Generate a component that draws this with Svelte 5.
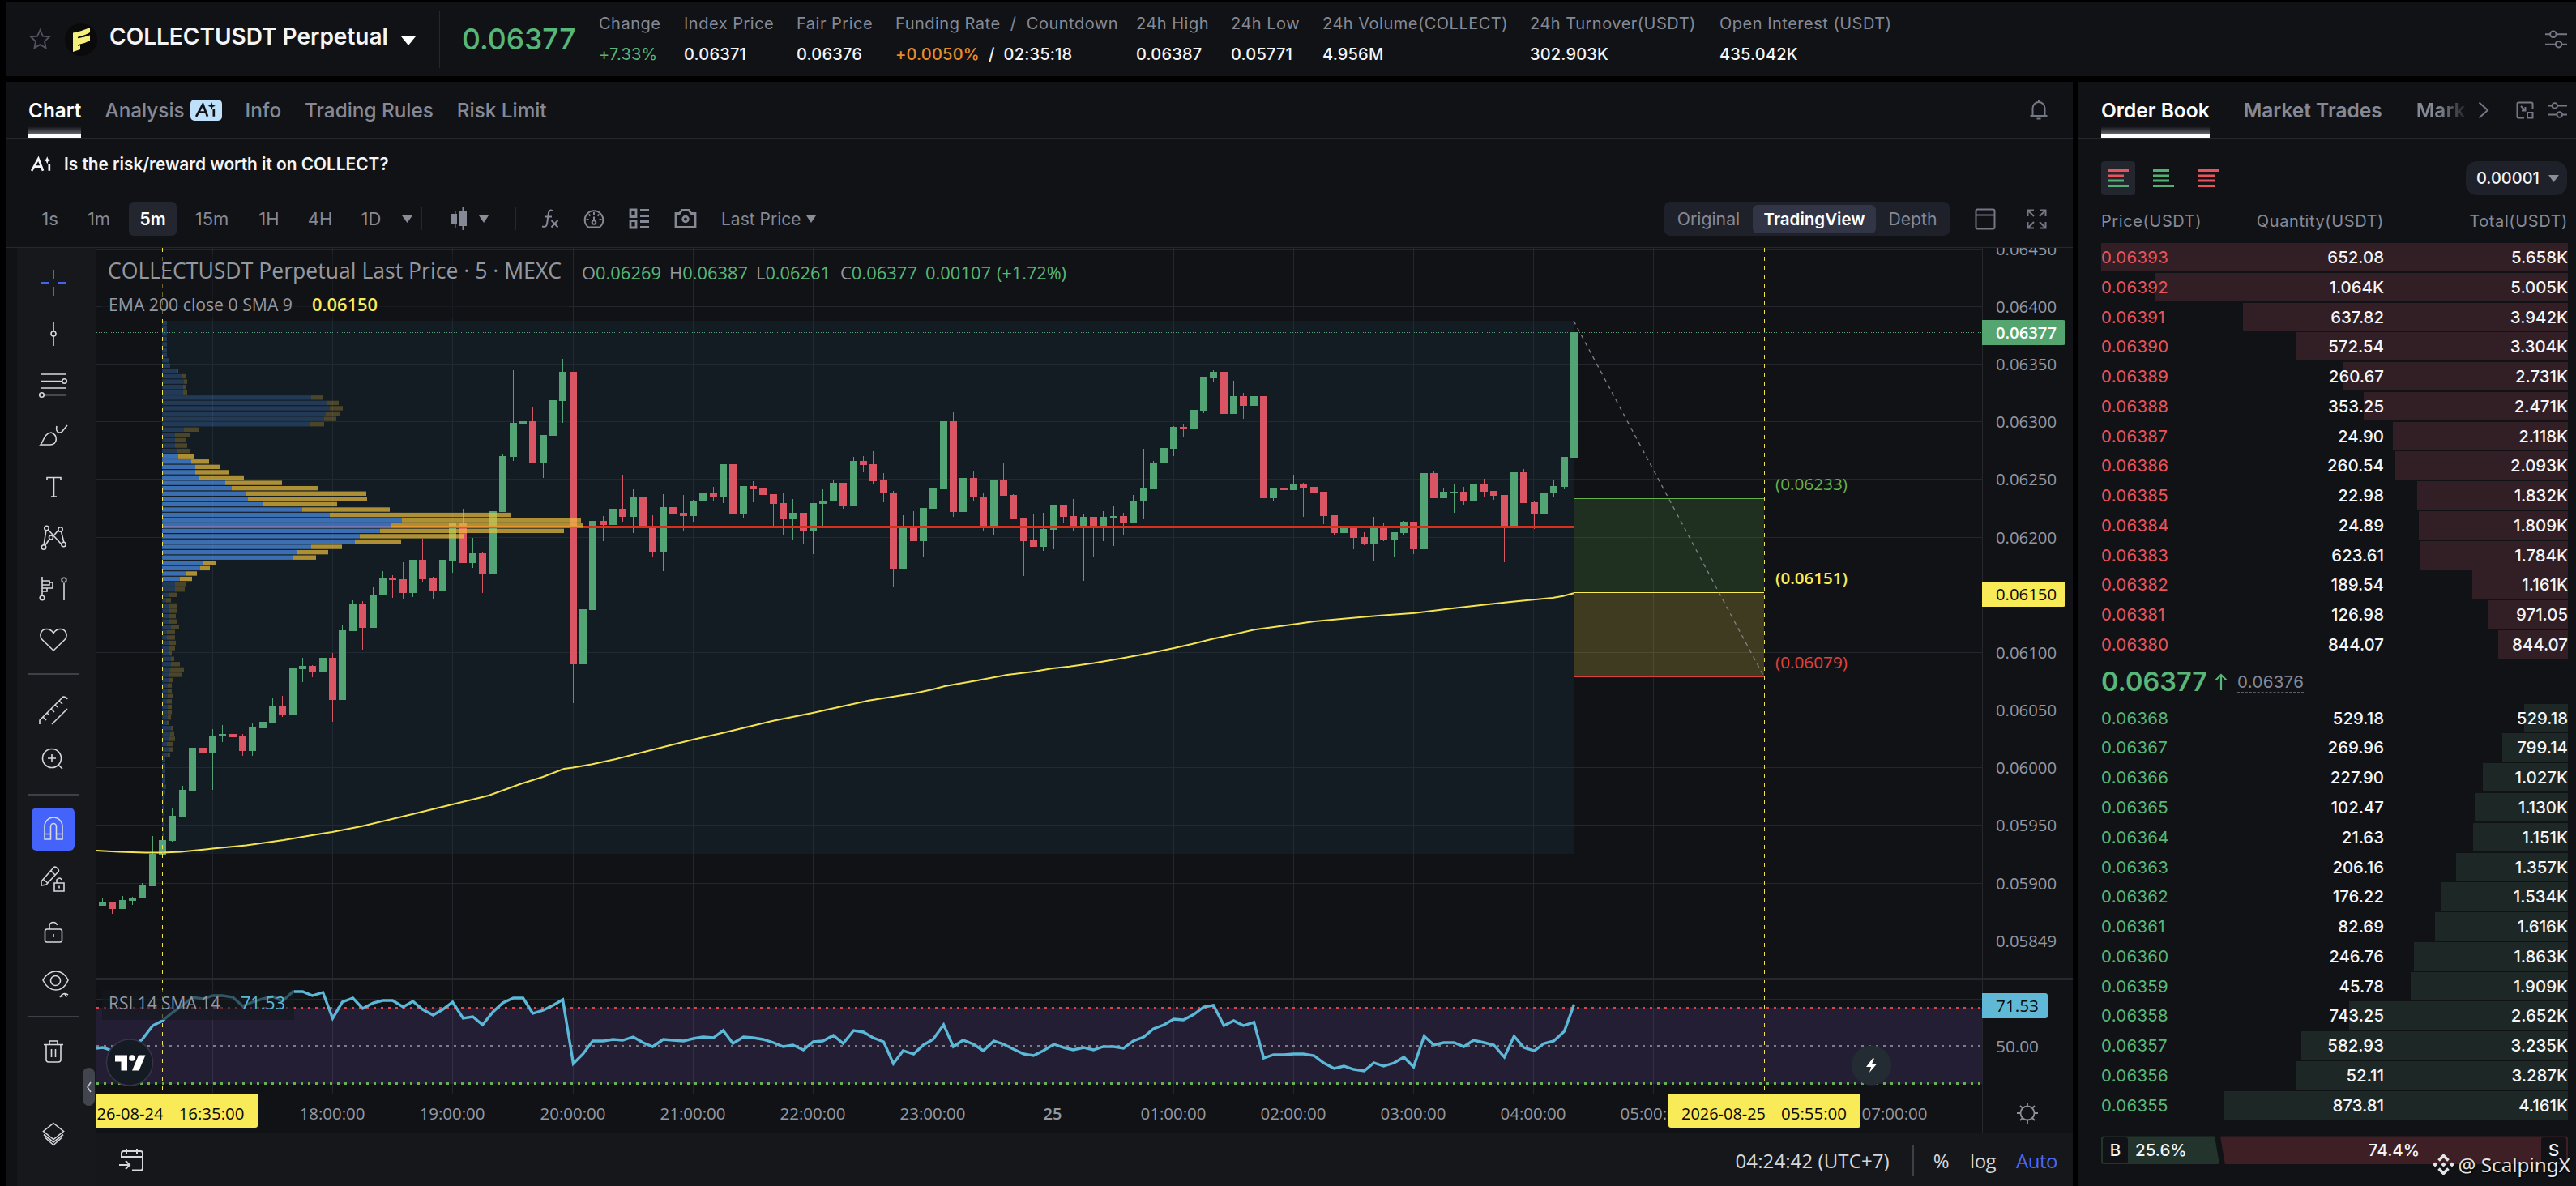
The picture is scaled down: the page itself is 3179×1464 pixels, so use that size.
<script>
  const stats = [
    { label: 'Change', value: '+7.33%', tone: 'up' },
    { label: 'Index Price', value: '0.06371' },
    { label: 'Fair Price', value: '0.06376' },
    { label: 'Funding Rate  /  Countdown', rate: '+0.0050%', value: '  /  02:35:18' },
    { label: '24h High', value: '0.06387' },
    { label: '24h Low', value: '0.05771' },
    { label: '24h Volume(COLLECT)', value: '4.956M' },
    { label: '24h Turnover(USDT)', value: '302.903K' },
    { label: 'Open Interest (USDT)', value: '435.042K' }
  ];

  const intervals = ['1s', '1m', '5m', '15m', '1H', '4H', '1D'];
  let activeInterval = $state('5m');
  let activeView = $state('TradingView');

  const asks = [
    ['0.06393', '652.08', '5.658K'], ['0.06392', '1.064K', '5.005K'],
    ['0.06391', '637.82', '3.942K'], ['0.06390', '572.54', '3.304K'],
    ['0.06389', '260.67', '2.731K'], ['0.06388', '353.25', '2.471K'],
    ['0.06387', '24.90', '2.118K'], ['0.06386', '260.54', '2.093K'],
    ['0.06385', '22.98', '1.832K'], ['0.06384', '24.89', '1.809K'],
    ['0.06383', '623.61', '1.784K'], ['0.06382', '189.54', '1.161K'],
    ['0.06381', '126.98', '971.05'], ['0.06380', '844.07', '844.07']
  ];
  const bids = [
    ['0.06368', '529.18', '529.18'], ['0.06367', '269.96', '799.14'],
    ['0.06366', '227.90', '1.027K'], ['0.06365', '102.47', '1.130K'],
    ['0.06364', '21.63', '1.151K'], ['0.06363', '206.16', '1.357K'],
    ['0.06362', '176.22', '1.534K'], ['0.06361', '82.69', '1.616K'],
    ['0.06360', '246.76', '1.863K'], ['0.06359', '45.78', '1.909K'],
    ['0.06358', '743.25', '2.652K'], ['0.06357', '582.93', '3.235K'],
    ['0.06356', '52.11', '3.287K'], ['0.06355', '873.81', '4.161K']
  ];
  const MAX_TOTAL = 5658;

  function depth(total) {
    const n = total.endsWith('K') ? parseFloat(total) * 1000 : parseFloat(total);
    return (n / MAX_TOTAL) * 100;
  }

  // color, body top, body bottom, high, low
  const candles = [
    'g 1113 1118 1108 1118', 'r 1113 1122 1113 1128', 'g 1111 1122 1106 1122', 'g 1108 1112 1107 1117',
    'g 1093 1109 1090 1109', 'g 1054 1094 1032 1094', 'g 1037 1055 1037 1055', 'g 1007 1038 997 1039',
    'g 975 1008 970 1008', 'g 923 976 923 977', 'r 923 929 869 933', 'g 908 929 900 975',
    'g 906 909 895 916', 'r 906 910 885 923', 'r 909 927 906 933', 'g 898 927 893 933',
    'g 891 899 866 905', 'g 872 892 862 892', 'r 872 883 859 885', 'g 825 883 792 890',
    'g 822 826 812 842', 'r 822 830 821 836', 'g 812 830 809 861', 'r 812 864 806 891',
    'g 778 864 771 864', 'g 745 779 741 779', 'r 745 775 742 802', 'g 734 775 725 775',
    'g 714 735 705 735', 'r 714 716 710 738', 'r 715 732 694 740', 'g 691 732 691 737',
    'r 691 715 665 718', 'r 714 729 712 740', 'g 691 729 691 729', 'g 645 692 645 707',
    'r 645 695 628 695', 'g 683 695 664 701', 'r 683 709 681 732', 'g 631 709 631 709',
    'g 563 632 560 632', 'g 522 564 457 569', 'g 520 523 494 533', 'r 520 571 503 571',
    'g 537 571 537 590', 'g 494 538 457 538', 'g 459 495 443 522', 'r 459 820 459 868',
    'g 752 820 747 826', 'g 643 753 643 753', 'r 643 648 637 668', 'g 628 648 628 649',
    'r 628 638 586 644', 'g 614 638 604 658', 'r 614 650 607 687', 'r 650 681 636 688',
    'g 626 681 610 705', 'r 626 634 611 657', 'r 633 637 611 655', 'g 618 637 617 644',
    'g 608 619 594 627', 'r 608 614 601 618', 'g 573 614 573 621', 'r 573 635 573 643',
    'g 600 635 600 640', 'r 600 604 594 620', 'r 603 611 600 620', 'r 610 622 610 650',
    'r 621 641 608 661', 'g 633 641 616 667', 'r 633 656 633 671', 'g 621 656 621 684',
    'g 618 622 604 650', 'g 596 619 593 619', 'r 596 625 596 628', 'g 569 625 564 625',
    'r 569 574 563 583', 'r 573 594 557 597', 'r 593 609 584 620', 'r 608 702 606 725',
    'g 650 702 636 702', 'r 650 668 631 668', 'g 627 668 627 688', 'g 603 628 577 628',
    'g 520 604 520 604', 'r 520 632 509 638', 'g 590 632 589 632', 'r 590 614 581 618',
    'r 613 650 608 655', 'g 593 650 593 661', 'r 593 612 571 612', 'r 611 641 610 641',
    'r 640 668 640 711', 'r 667 675 634 675', 'g 653 675 633 680', 'g 623 654 623 678',
    'r 623 638 623 645', 'r 637 650 616 655', 'g 638 650 634 717', 'r 638 650 638 688',
    'g 638 650 631 668', 'g 637 639 624 674', 'r 637 645 633 661', 'g 618 645 611 645',
    'g 603 619 554 641', 'g 571 604 569 604', 'g 553 572 553 583', 'g 527 554 526 563',
    'r 527 530 523 540', 'g 506 530 503 534', 'g 465 507 465 510', 'g 459 466 457 472',
    'r 459 511 459 511', 'g 489 511 470 511', 'r 489 501 485 517', 'g 489 501 489 527',
    'r 489 615 489 615', 'g 603 615 603 618', 'r 603 605 597 607', 'g 598 605 586 605',
    'r 598 602 596 638', 'r 601 608 593 616', 'r 607 637 607 647', 'r 636 658 636 660',
    'g 650 658 630 661', 'r 650 664 650 678', 'r 663 672 657 673', 'g 650 672 638 692',
    'r 650 666 645 668', 'g 657 666 657 688', 'g 644 658 643 660', 'r 644 678 644 684',
    'g 584 678 584 678', 'r 584 615 581 615', 'g 607 615 603 615', 'g 607 608 597 633',
    'r 607 619 601 623', 'g 598 619 598 619', 'r 598 607 591 614', 'r 606 612 606 617',
    'r 611 650 611 694', 'g 583 650 583 653', 'r 583 621 579 621', 'r 620 635 618 653',
    'g 608 635 607 635', 'g 600 609 593 613', 'g 564 601 564 604', 'g 410 565 396 576'
  ].map((row, i) => {
    const [color, top, bottom, high, low] = row.split(' ');
    return { x: slot(i), color, top: +top, bottom: +bottom, high: +high, low: +low };
  });

  function slot(i) {
    return Math.floor(126.5 + 12.354 * i);
  }

  // volume profile: up volume width, total width, one row per 6.58px
  const ROW = 6.58;
  const profile = [
    [6, 6], [6, 6], [6, 6], [6, 6], [6, 6], [6, 6], [6, 6], [9, 9], [10, 10], [18, 20],
    [24, 29], [27, 31], [26, 30], [26, 31], [184, 198], [204, 218], [207, 223], [202, 219], [200, 215], [183, 200],
    [27, 46], [16, 34], [16, 30], [16, 31], [19, 34], [20, 39], [36, 58], [41, 71], [41, 83], [46, 101],
    [78, 148], [86, 192], [103, 252], [106, 253], [124, 216], [173, 281], [207, 431], [296, 517], [283, 519], [269, 496],
    [244, 372], [238, 295], [184, 222], [167, 205], [161, 190], [51, 67], [47, 59], [30, 43], [22, 37], [16, 30],
    [16, 28], [9, 19], [5, 11], [8, 18], [8, 18], [8, 17], [8, 18], [11, 21], [6, 16], [6, 16],
    [8, 17], [8, 16], [8, 12], [11, 15], [11, 22], [10, 27], [9, 25], [9, 13], [7, 12], [7, 12],
    [7, 13], [6, 12], [7, 12], [7, 12], [7, 11], [6, 9], [11, 14], [10, 15], [9, 16], [6, 13],
    [8, 14], [7, 10], [4, 4], [4, 4], [4, 4], [4, 4], [4, 4], [5, 5], [4, 4], [3, 3],
    [3, 3], [3, 3], [3, 3], [2, 2], [2, 2], [2, 2], [2, 2], [2, 2], [2, 2], [2, 2]
  ];
  const VALUE_AREA = [25, 48];

  const ema =
    '119,1050 147,1051.5 179,1052.6 200,1052.6 223,1051.5 262,1047.6 304,1043.4 350,1037 397,1029 410,1027 446,1020 509,1005 558,993 603,982 643,967.5 670,959 696,949 707,947.5 730,943.5 760,937 827,920 855,913 892,904.7 953,890 1003,880 1039,872 1072,864.7 1108,859 1129,855.7 1151,851 1166,847 1206,840 1243,833 1276,829 1299,825 1320,822.7 1350,818.5 1385,812.5 1420,806 1449,800 1472,794.7 1498,788.3 1523,783 1548,777.3 1596,770.7 1622,767 1658,763.7 1704,759.7 1746,756.7 1792,751 1834,746.3 1864,743 1892,740.3 1916,738 1929,735.7 1942,732.3';

  const rsi = [
    1293, 1297, 1301, 1292, 1283, 1266, 1260, 1250, 1241, 1231, 1233, 1229, 1229, 1231, 1242, 1237, 1233, 1230, 1236,
    1224, 1224, 1229, 1225, 1257, 1237, 1232, 1245, 1238, 1235, 1235, 1243, 1236, 1246, 1253, 1246, 1237, 1257, 1255,
    1265, 1249, 1238, 1232, 1232, 1251, 1247, 1241, 1234, 1313, 1301, 1285, 1285, 1283, 1284, 1280, 1287, 1292, 1283,
    1284, 1285, 1282, 1280, 1281, 1272, 1288, 1280, 1281, 1283, 1287, 1292, 1290, 1296, 1286, 1285, 1278, 1288, 1272,
    1274, 1281, 1286, 1313, 1297, 1301, 1290, 1283, 1265, 1292, 1284, 1289, 1297, 1285, 1289, 1295, 1301, 1303, 1297,
    1289, 1293, 1296, 1293, 1296, 1292, 1292, 1294, 1285, 1280, 1270, 1265, 1258, 1259, 1252, 1243, 1241, 1266, 1260,
    1266, 1262, 1306, 1302, 1302, 1301, 1301, 1303, 1312, 1319, 1316, 1320, 1322, 1312, 1316, 1312, 1305, 1317, 1279,
    1290, 1287, 1287, 1292, 1284, 1287, 1290, 1305, 1279, 1293, 1297, 1288, 1285, 1273, 1240
  ];
  const rsiPoints = '119,1294 ' + rsi.map((y, i) => `${slot(i) + 0.5},${y}`).join(' ');

  const priceGrid = [
    [307, '0.06450'], [378, '0.06400'], [449, '0.06350'], [520, '0.06300'], [591, '0.06250'],
    [663, '0.06200'], [734, ''], [805, '0.06100'], [876, '0.06050'], [947, '0.06000'],
    [1018, '0.05950'], [1090, '0.05900'], [1161, '0.05849']
  ];
  const timeGrid = [
    [262, ''], [410, '18:00:00'], [558, '19:00:00'], [707, '20:00:00'], [855, '21:00:00'],
    [1003, '22:00:00'], [1151, '23:00:00'], [1299, '25'], [1448, '01:00:00'], [1596, '02:00:00'],
    [1744, '03:00:00'], [1892, '04:00:00'], [2040, '05:00:00'], [2190, ''], [2338, '07:00:00']
  ];
  const ohlc = [
    ['O', '0.06269', 718, 98], ['H', '0.06387', 826, 97], ['L', '0.06261', 933, 92], ['C', '0.06377', 1037, 95],
    ['', '0.00107', 1142, 81], ['', '(+1.72%)', 1230, 86]
  ];
</script>

{#snippet sliders(size)}
  <svg class="icon" width={size} height={size} viewBox="0 0 26 26">
    <path d="M0 7h6M13 7h13M0 19h12M20 19h6" />
    <circle cx="9.500" cy="7" r="3.600" />
    <circle cx="16" cy="19" r="3.600" />
  </svg>
{/snippet}

{#snippet aiMark(width, height)}
  <svg class="icon ai" {width} {height} viewBox="0 0 28 18">
    <path d="M2 17L10 2.500L15.500 17M5.500 12H13M23 8.500V17" />
    <path class="solid" d="M20.500 0l1.200 3.300 3.300 1.200-3.300 1.200-1.200 3.300-1.200-3.300-3.300-1.200 3.300-1.200z" />
  </svg>
{/snippet}

{#snippet caret(w, h)}
  <svg class="caret" width={w} height={h} viewBox="0 0 12 8" preserveAspectRatio="none"><path d="M0 0H12L6 8Z" /></svg>
{/snippet}

{#snippet bookRow(row, side)}
  <div class="row {side}">
    <div class="bar" style="width: {depth(row[2])}%"></div>
    <span class="price">{row[0]}</span>
    <span>{row[1]}</span>
    <span>{row[2]}</span>
  </div>
{/snippet}

<div class="app">
  <header>
    <svg class="star" width="27" height="27" viewBox="0 0 26 26">
      <path d="M13 2l3.300 7.200 7.700.9-5.700 5.300 1.500 7.800L13 19.400 6.200 23.200l1.500-7.800L2 10.100l7.700-.9z" />
    </svg>
    <svg class="coin" width="42" height="42" viewBox="0 0 42 42">
      <circle cx="21" cy="21" r="20" />
      <path d="M11 12.500Q20 11 32 6V12Q26 16 18 17V18.500Q25 18 32 15.500V22Q28 26 20 27V33L11 36Z" />
      <path class="slit" d="M17 18.500Q25 17.500 33 13M17 28Q25 27 33 22.500" />
    </svg>
    <h1>COLLECTUSDT Perpetual</h1>
    <span class="white">{@render caret(18, 11)}</span>
    <div class="last-price">0.06377</div>
    <div class="stats">
      {#each stats as stat}
        <div class="stat">
          <span class="label">{stat.label}</span>
          <span class="value {stat.tone ?? ''}">{#if stat.rate}<em>{stat.rate}</em>{/if}{stat.value}</span>
        </div>
      {/each}
    </div>
    {@render sliders(27)}
  </header>

  <main>
    <section class="chart-panel">
      <nav class="tabs">
        <span class="tab active">Chart</span>
        <span class="tab">Analysis <i class="ai-badge">{@render aiMark(29, 19)}</i></span>
        <span class="tab">Info</span>
        <span class="tab">Trading Rules</span>
        <span class="tab">Risk Limit</span>
        <svg class="icon bell" width="24" height="26" viewBox="0 0 24 26">
          <path d="M1.500 20H22.500M4.500 20V10.500a7.500 7.500 0 0 1 15 0V20M12 3V0.500M9.500 23.500h5" />
        </svg>
      </nav>

      <div class="question">
        {@render aiMark(29, 19)}
        <b>Is the risk/reward worth it on COLLECT?</b>
      </div>

      <div class="toolbar">
        <div class="intervals">
          {#each intervals as item}
            <button class:active={item === activeInterval} onclick={() => (activeInterval = item)}>{item}</button>
          {/each}
        </div>
        {@render caret(13, 9)}
        <i class="sep"></i>
        <svg class="candle-icon" width="24" height="28" viewBox="0 0 24 28">
          <path d="M3 8h4v-4h1.500v4H10v13H8.500v4H7v-4H3zM13 5h3.500V0H18v5h4v18h-4v5h-1.500v-5H13z" />
        </svg>
        <span class="candle-caret">{@render caret(12, 9)}</span>
        <i class="sep"></i>
        <div class="tools">
          <svg class="icon" width="22" height="24" viewBox="0 0 22 24">
            <path d="M14 2.500Q10.500 0 9 4.500L7 18.500Q6 23 1 21.500M4 9.500H13M12.500 14L20.500 22.500M20.500 14L12.500 22.500" />
          </svg>
          <svg class="icon" width="26" height="24" viewBox="0 0 26 24">
            <path d="M6 22.500A11.300 11.300 0 1 1 20 22.500ZM13 4v3M3.500 13h3M19.500 13h3M6.500 6.500l2 2M19.500 6.500l-2 2M13 9.500v5" />
            <circle cx="13" cy="16.500" r="2.300" />
          </svg>
          <svg class="icon heavy" width="26" height="26" viewBox="0 0 26 26">
            <path d="M2 2h7v8.500H2zM2 15.500h7V24H2zM14 2.500h11M14 9.500h11M14 16.500h11M14 23.500h11" />
          </svg>
          <svg class="icon heavy" width="28" height="24" viewBox="0 0 28 24">
            <path d="M2 5.500H6.500L9.500 1.500H18L21 5.500H26V22.500H2Z" />
            <circle cx="14" cy="12.500" r="3.300" />
          </svg>
          <span>Last Price</span>
          {@render caret(12, 9)}
        </div>
        <div class="views">
          {#each ['Original', 'TradingView', 'Depth'] as view}
            <button class:active={view === activeView} onclick={() => (activeView = view)}>{view}</button>
          {/each}
        </div>
        <svg class="icon window" width="26" height="27" viewBox="0 0 26 27">
          <rect x="1.500" y="1.500" width="23" height="24" rx="2" />
          <path d="M1.500 8.500H24.500" />
        </svg>
        <svg class="icon" width="25" height="25" viewBox="0 0 25 25">
          <path d="M9 1.500H1.500V9M2 2l7 7M16 1.500h7.500V9M23 2l-7 7M9 23.500H1.500V16M2 23l7-7M16 23.500h7.500V16M23 23l-7-7" />
        </svg>
      </div>

      <div class="workspace">
        <aside>
          <div class="tool blue">
            <svg width="34" height="34" viewBox="0 0 34 34"><path d="M17 1V12M17 22V33M1 17H12M22 17H33" /></svg>
          </div>
          <div class="tool">
            <svg width="34" height="32" viewBox="0 0 34 32"><path d="M17 1V13M17 19V31" /><circle cx="17" cy="16" r="3" /></svg>
          </div>
          <div class="tool">
            <svg width="36" height="34" viewBox="0 0 36 34">
              <path d="M2 4H33M2 12.500H29M2 21H33M6 29.500H33" />
              <circle cx="31.500" cy="12.500" r="2.800" /><circle cx="3.500" cy="29.500" r="2.800" />
            </svg>
          </div>
          <div class="tool">
            <svg width="36" height="32" viewBox="0 0 36 32">
              <path d="M2 27C6 23 6 13 15 12C24 15 23 27 14 27ZM22 4C20 13 27 14 30 9L35 3" />
            </svg>
          </div>
          <div class="tool">
            <svg width="34" height="34" viewBox="0 0 34 34"><path d="M9 9V5.500H26V9M17.500 5.500V29M14 29H21" /></svg>
          </div>
          <div class="tool">
            <svg width="34" height="34" viewBox="0 0 34 34">
              <path d="M5 26L8 7M10.500 7L26 24M12 18.500L6.500 26.500M16.500 15L23 7.500M26.500 9L30 23" />
              <circle cx="8.500" cy="5" r="2.700" /><circle cx="25.500" cy="6.500" r="2.700" />
              <circle cx="5" cy="28.500" r="2.700" /><circle cx="29.500" cy="25" r="2.700" />
              <circle cx="14" cy="16.500" r="2.500" />
            </svg>
          </div>
          <div class="tool">
            <svg width="36" height="34" viewBox="0 0 36 34">
              <path d="M4 2V25M4 7H13V12H4M13 9H17V16H4M10 16V20H4M31 10V31" />
              <circle cx="4" cy="28" r="2.800" /><circle cx="31" cy="6" r="2.800" />
            </svg>
          </div>
          <div class="tool">
            <svg width="36" height="32" viewBox="0 0 36 32">
              <path d="M18 29L4 15.500C-.5 10 3 2.500 9.500 2.500C13.500 2.500 16 4.500 18 7.500C20 4.500 22.500 2.500 26.500 2.500C33 2.500 36.500 10 32 15.500Z" />
            </svg>
          </div>
          <hr />
          <div class="tool">
            <svg width="38" height="38" viewBox="0 0 38 38">
              <path d="M2 36V31L31 2Q35 2 36 5M17 36L36 17M6 27l4 4M11 22l3 3M16 17l4 4M21 12l3 3M26 7l4 4" />
            </svg>
          </div>
          <div class="tool">
            <svg width="34" height="34" viewBox="0 0 34 34">
              <circle cx="15" cy="16" r="11.500" /><path d="M15 11V21M10 16H20M23 24L28 29" />
            </svg>
          </div>
          <hr />
          <div class="tool selected">
            <svg width="34" height="34" viewBox="0 0 34 34">
              <path d="M6 30V14A11 11 0 0 1 28 14V30H20.500V14A3.500 3.500 0 0 0 13.500 14V30ZM6 23.500H13.500M20.500 23.500H28" />
            </svg>
          </div>
          <div class="tool">
            <svg width="34" height="36" viewBox="0 0 34 36">
              <path d="M2 21L17 4Q19 2 22 5T22 10L8 25L2 26ZM5 19L10 23M14 8L19 13M18 23V33H30V23ZM21 23V19Q25 15 27 19M24 26.500V29.500" />
            </svg>
          </div>
          <div class="tool">
            <svg width="34" height="34" viewBox="0 0 34 34">
              <rect x="6.500" y="14" width="21" height="16" rx="2.500" /><path d="M12 14V9A5 5 0 0 1 21.500 9M17 20V24" />
            </svg>
          </div>
          <div class="tool">
            <svg width="38" height="38" viewBox="0 0 38 38">
              <path d="M6 15Q12 4 22 4T37 15Q32 27 22 27T6 15ZM27 36Q31 29 37 33M30 36l-2-2M33 32l2 4" />
              <circle cx="21.500" cy="15.500" r="6" />
            </svg>
          </div>
          <hr />
          <div class="tool">
            <svg width="30" height="32" viewBox="0 0 30 32">
              <path d="M3 7.500H27M10 7.500V3H20V7.500M6 7.500V26Q6 29 9 29H21Q24 29 24 26V7.500M12.500 13V23M17.500 13V23" />
            </svg>
          </div>
          <div class="tool">
            <svg width="32" height="32" viewBox="0 0 32 32">
              <path d="M16 2.500L28.500 12.500L16 22.500L3.500 12.500ZM4 16.500L16 26L28 16.500M6 20.500L16 29.500L26 20.500" />
            </svg>
          </div>
          <div class="collapse"><svg width="8" height="14" viewBox="0 0 8 14"><path d="M6 1L2 7L6 13" /></svg></div>
        </aside>

        <div class="chart-area">
          <svg class="chart" width="2439" height="1092" viewBox="119 306 2439 1092">
            <defs>
              <clipPath id="pane"><rect x="119" y="306" width="2327" height="902" /></clipPath>
            </defs>
            <g class="grid">
              {#each priceGrid as [y]}<rect x="119" {y} width="2327" height="1" />{/each}
              <rect x="119" y="1233" width="2327" height="1" />
              {#each timeGrid as [x]}<rect {x} y="306" width="1" height="1044" />{/each}
            </g>
            <rect class="range" x="200" y="396" width="1742" height="658" />

            <rect class="rsi-band" x="119" y="1244" width="2327" height="94" />
            <g class="projection">
              <rect class="target" x="1942" y="615" width="235" height="116" />
              <rect class="stop" x="1942" y="731" width="235" height="105" />
              <path class="line-g" d="M1942 615.500H2177" />
              <path class="line-r" d="M1942 835.500H2177" />
              <path class="line-y" d="M1942 731.500H2177" />
              <path class="diag" d="M1942 396L2177 835.500" />
            </g>

            <path class="last-line" d="M119 410.500H2446" />
            <g clip-path="url(#pane)">
              {#each candles as c}
                <rect class={c.color} x={c.x} y={c.high} width="1" height={c.low - c.high} />
                <rect class={c.color} x={c.x - 4} y={c.top} width="9" height={c.bottom - c.top} />
              {/each}
              <polyline class="ema" points={ema} />
              <rect class="poc" x="200" y="649" width="1742" height="3" />
              {#each profile as [up, total], i}
                <g class="vol" class:dim={i < VALUE_AREA[0] || i > VALUE_AREA[1]}>
                  <rect class="up-vol" x="200" y={396 + i * ROW} width={up} height="5.400" />
                  {#if total > up}
                    <rect class="down-vol" x={200 + up} y={396 + i * ROW} width={total - up} height="5.400" />
                  {/if}
                </g>
              {/each}
            </g>

            <path class="dots red" d="M119 1244.500H2446" />
            <path class="dots gray" d="M119 1291.500H2446" />
            <path class="dots green" d="M119 1337.500H2446" />
            <polyline class="rsi" points={rsiPoints} />

            <path class="vline" d="M200.500 306V1350M2177.500 306V1350" />
            <rect class="legend-bg" x="126" y="1222" width="237" height="37" />

            <g class="frame">
              <rect x="119" y="1207" width="2439" height="3" />
              <rect x="119" y="1350" width="2439" height="1" />
              <rect x="2446" y="306" width="1" height="1092" />
            </g>

            <rect class="legend-bg top" x="126" y="314" width="576" height="80" />
            <text class="symbol" x="133" y="343.500" textLength="560" lengthAdjust="spacingAndGlyphs">COLLECTUSDT Perpetual Last Price · 5 · MEXC</text>
            {#each ohlc as [letter, value, x, w]}
              <text class="ohlc" {x} y="345" textLength={w} lengthAdjust="spacingAndGlyphs">{#if letter}<tspan class="key">{letter}</tspan>{/if}{value}</text>
            {/each}
            <text class="indicator" x="134" y="383.500" textLength="227" lengthAdjust="spacingAndGlyphs">EMA 200 close 0 SMA 9</text>
            <text class="indicator yellow" x="385" y="383.500" textLength="81" lengthAdjust="spacingAndGlyphs">0.06150</text>
            <text class="indicator" x="134" y="1245.500" textLength="138" lengthAdjust="spacingAndGlyphs">RSI 14 SMA 14</text>
            <text class="indicator cyan" x="297" y="1245.500" textLength="55" lengthAdjust="spacingAndGlyphs">71.53</text>

            <g class="proj-text">
              <text class="t-green" x="2191" y="605" textLength="89" lengthAdjust="spacingAndGlyphs">(0.06233)</text>
              <text class="t-yellow" x="2191" y="720.500" textLength="89" lengthAdjust="spacingAndGlyphs">(0.06151)</text>
              <text class="t-red" x="2191" y="825" textLength="89" lengthAdjust="spacingAndGlyphs">(0.06079)</text>
            </g>

            <g class="axis">
              {#each priceGrid as [y, label]}
                {#if label}<text x="2463" y={y + 7.5} textLength="75" lengthAdjust="spacingAndGlyphs">{label}</text>{/if}
              {/each}
              <text x="2463" y="1298.500" textLength="53" lengthAdjust="spacingAndGlyphs">50.00</text>
              {#each timeGrid as [x, label]}
                {#if label}
                  <text class="mid" {x} y="1382" textLength={label === '25' ? 23 : 81} lengthAdjust="spacingAndGlyphs" class:day={label === '25'}>{label}</text>
                {/if}
              {/each}
            </g>

            <path class="tag-green" d="M2446 395H2546a3 3 0 0 1 3 3V423a3 3 0 0 1-3 3H2446Z" />
            <text class="tag-text light" x="2463" y="418" textLength="75" lengthAdjust="spacingAndGlyphs">0.06377</text>
            <path class="tag-yellow" d="M2446 718H2546a3 3 0 0 1 3 3V746a3 3 0 0 1-3 3H2446Z" />
            <text class="tag-text" x="2463" y="741" textLength="75" lengthAdjust="spacingAndGlyphs">0.06150</text>
            <path class="tag-cyan" d="M2446 1226H2524a3 3 0 0 1 3 3V1254a3 3 0 0 1-3 3H2446Z" />
            <text class="tag-text" x="2463" y="1249" textLength="53" lengthAdjust="spacingAndGlyphs">71.53</text>

            <path class="tag-yellow" d="M119 1350H318V1389a3 3 0 0 1-3 3H119Z" />
            <text class="tag-text" x="119.500" y="1382" textLength="82" lengthAdjust="spacingAndGlyphs">26-08-24</text>
            <text class="tag-text" x="220.500" y="1382" textLength="81" lengthAdjust="spacingAndGlyphs">16:35:00</text>
            <path class="tag-yellow" d="M2059 1350H2296V1389a3 3 0 0 1-3 3H2062a3 3 0 0 1-3-3Z" />
            <text class="tag-text" x="2075" y="1382" textLength="104" lengthAdjust="spacingAndGlyphs">2026-08-25</text>
            <text class="tag-text" x="2198" y="1382" textLength="81" lengthAdjust="spacingAndGlyphs">05:55:00</text>

            <circle class="tv-ring" cx="160" cy="1311.500" r="28.500" />
            <path class="tv-logo" d="M142 1302.500H157V1321.500H149.500V1310.500H142ZM171 1302.500H179.500L171.500 1321.500H163Z" />
            <circle class="tv-logo" cx="163" cy="1306" r="3.800" />
            <circle class="flash" cx="2309.500" cy="1315" r="24.500" />
            <path class="bolt" d="M2311 1306.500L2303 1317H2309L2307 1324L2316 1313.500H2310L2313 1306.500Z" />

            <g class="gear">
              <circle cx="2502" cy="1374" r="8.500" />
              <path d="M2502 1361v4.500M2502 1382.500v4.500M2489 1374h4.500M2510.500 1374h4.500M2493 1365l3 3M2508 1380l3 3M2511 1365l-3 3M2496 1380l-3 3" />
            </g>
          </svg>

          <footer>
            <svg class="calendar" width="32" height="28" viewBox="0 0 32 28">
              <path d="M4 12V5.500Q4 3 6.500 3H27.500Q30 3 30 5.500V24Q30 26.500 27.500 26.500H17M4 10H30M10 0V6M23 0V6M1 20H14M9 15L14 20L9 25" />
            </svg>
            <span class="clock">04:24:42 (UTC+7)</span>
            <i></i>
            <span class="pct">%</span>
            <span class="log">log</span>
            <span class="auto">Auto</span>
          </footer>
        </div>
      </div>
    </section>

    <section class="book-panel">
      <nav class="tabs">
        <span class="tab active">Order Book</span>
        <span class="tab">Market Trades</span>
        <span class="tab fade">Mark</span>
        <svg class="icon next" width="14" height="22" viewBox="0 0 14 22"><path d="M1.500 1.500L12 11L1.500 20.500" /></svg>
        <svg class="icon pop" width="22" height="22" viewBox="0 0 22 22">
          <path d="M10 20.500H3Q1.500 20.500 1.500 19V3Q1.500 1.500 3 1.500H19Q20.500 1.500 20.500 3V10M6 6L11 11M11.500 7V11.500H7M14 14H20.500V20.500H14Z" />
        </svg>
        {@render sliders(24)}
      </nav>

      <div class="modes">
        <div class="mode on">
          <svg width="26" height="22" viewBox="0 0 26 22">
            <path class="mr" d="M0 1.500H26M0 8H20" /><path class="mg" d="M0 14H20M0 20.500H26" />
          </svg>
        </div>
        <div class="mode">
          <svg width="26" height="22" viewBox="0 0 26 22"><path class="mg" d="M0 1.500H20M0 8H20M0 14H20M0 20.500H26" /></svg>
        </div>
        <div class="mode">
          <svg width="26" height="22" viewBox="0 0 26 22"><path class="mr" d="M0 1.500H26M0 8H20M0 14H20M0 20.500H20" /></svg>
        </div>
        <div class="precision">0.00001 {@render caret(13, 9)}</div>
      </div>

      <div class="columns">
        <span>Price(USDT)</span><span>Quantity(USDT)</span><span>Total(USDT)</span>
      </div>
      <div class="rows">
        {#each asks as row}{@render bookRow(row, 'ask')}{/each}
      </div>
      <div class="mid-price">
        <b>0.06377</b>
        <svg width="16" height="22" viewBox="0 0 16 22"><path d="M8 21V2M1.500 8.500L8 2L14.500 8.500" /></svg>
        <span>0.06376</span>
      </div>
      <div class="rows">
        {#each bids as row}{@render bookRow(row, 'bid')}{/each}
      </div>

      <div class="ratio">
        <div class="buy"><b>B</b>25.6%</div>
        <div class="sell"><span>74.4%</span><b>S</b></div>
      </div>

      <div class="watermark">
        <svg width="27" height="27" viewBox="0 0 26 26">
          <path d="M13 0L20 7L17.500 9.500L13 5L8.500 9.500L6 7ZM3 10L6 13L3 16L0 13ZM23 10L26 13L23 16L20 13ZM13 10L16 13L13 16L10 13ZM13 26L6 19L8.500 16.500L13 21L17.500 16.500L20 19Z" />
        </svg>
        @ ScalpingX
      </div>
    </section>
  </main>
</div>

<style>
  :global(body) {
    background: #000;
  }

  .app {
    width: 3179px;
    height: 1464px;
    overflow: hidden;
    box-sizing: border-box;
    padding: 3px 0 0 7px;
    display: flex;
    flex-direction: column;
    gap: 7px;
    background: #000;
    color: #f4f5f7;
    font-family: Inter, 'Liberation Sans', sans-serif;
    font-size: 21px;
    font-weight: 500;
  }

  svg {
    flex: none;
    display: block;
  }

  .icon {
    fill: none;
    stroke: #747884;
    stroke-width: 2;
  }

  .icon .solid {
    fill: currentColor;
    stroke: none;
  }

  .ai {
    stroke: currentColor;
    stroke-width: 2.6;
  }

  .caret {
    fill: #8a8d98;
  }

  button {
    border: 0;
    padding: 0;
    background: none;
    color: #858995;
    font: inherit;
  }

  header {
    height: 91px;
    flex: none;
    display: flex;
    align-items: center;
    padding: 0 11px 0 29px;
    background: #111216;
  }

  .star {
    fill: none;
    stroke: #4f5360;
    stroke-width: 1.8;
  }

  .coin {
    margin: 0 14px 0 16px;
    fill: #0a0a0a;
  }

  .coin path {
    fill: #f4f07c;
  }

  .coin .slit {
    fill: none;
    stroke: #0a0a0a;
    stroke-width: 1.5;
  }

  h1 {
    margin: -8px 0 0;
    width: 345px;
    font-size: 28px;
    font-weight: 600;
    white-space: nowrap;
  }

  .white {
    margin: 4px 0 0 15px;
  }

  .white .caret {
    fill: #fff;
  }

  .last-price {
    margin-left: 29px;
    width: 197px;
    height: 70px;
    line-height: 70px;
    box-sizing: border-box;
    padding-left: 27px;
    border-left: 1px solid #25272d;
    font-size: 35.5px;
    color: #58b778;
  }

  .stats {
    flex: 1;
    display: grid;
    grid-template-columns: 105px 139px 122px 297px 117px 113px 256px 234px 300px;
  }

  .stat {
    display: flex;
    flex-direction: column;
    gap: 14px;
    margin-top: -2px;
    font-size: 20px;
    line-height: 24px;
    white-space: pre;
  }

  .stat .label {
    color: #858995;
    font-weight: 400;
    letter-spacing: 0.5px;
  }

  .stat .value {
    letter-spacing: 0.2px;
  }

  .up {
    color: #58b778;
    font-weight: 400;
  }

  em {
    font-style: normal;
    color: #e98d2c;
  }

  main {
    flex: 1;
    display: flex;
    gap: 7px;
    min-height: 0;
  }

  .chart-panel {
    width: 2551px;
    flex: none;
    background: #111216;
  }

  .book-panel {
    flex: 1;
    min-width: 0;
    background: #111216;
  }

  .tabs {
    height: 69px;
    display: flex;
    align-items: center;
    gap: 29px;
    padding: 0 30px 0 28px;
    border-bottom: 1px solid #26282e;
    font-size: 24.3px;
    color: #858995;
    white-space: nowrap;
  }

  .tab {
    height: 69px;
    display: flex;
    align-items: center;
    gap: 7px;
  }

  .tab.active {
    color: #fff;
    font-weight: 600;
    box-sizing: border-box;
    border-bottom: 4px solid #fff;
    padding-top: 4px;
    background: linear-gradient(to top, #6c6e73 0, #303238 6px, #111216 10px);
  }

  .ai-badge {
    width: 39px;
    height: 26px;
    display: flex;
    align-items: center;
    justify-content: center;
    border-radius: 5px;
    background: #bfe0fa;
    color: #111216;
  }

  .bell {
    margin-left: auto;
  }

  .question {
    height: 63px;
    display: flex;
    align-items: center;
    gap: 13px;
    padding-left: 30px;
    border-bottom: 1px solid #26282e;
    font-size: 20.8px;
  }

  .question b {
    font-weight: 600;
  }

  .toolbar {
    height: 70px;
    display: flex;
    align-items: center;
    padding: 0 32px 0 30px;
    border-bottom: 1px solid #26282e;
    color: #858995;
    font-weight: 400;
    font-size: 22px;
  }

  .intervals {
    margin-right: 10px;
    display: grid;
    grid-template-columns: 49px 72px 61px 85px 56px 70px 56px;
    justify-items: center;
  }

  .intervals button {
    height: 42px;
  }

  .intervals .active {
    width: 59px;
    border-radius: 6px;
    background: #23252f;
    color: #fff;
    font-weight: 600;
    font-size: 21px;
  }

  .sep {
    width: 1px;
    height: 28px;
    margin-left: 11px;
    background: #26282e;
  }

  .candle-icon {
    margin-left: 33px;
    fill: #858995;
  }

  .candle-caret {
    margin: 0 22px 0 13px;
  }

  .tools {
    display: flex;
    align-items: center;
    margin-left: 31px;
  }

  .tools .icon {
    margin-right: 30px;
    stroke: #858995;
  }

  .tools .heavy {
    stroke-width: 2.8;
  }

  .tools span {
    width: 105px;
    white-space: nowrap;
    font-size: 21px;
  }

  .views {
    width: 352px;
    height: 42px;
    margin: 0 31px 0 auto;
    display: grid;
    grid-template-columns: 109px 152px 91px;
    align-items: center;
    border-radius: 7px;
    background: #1f212a;
    font-size: 21.2px;
  }

  .views button {
    height: 35px;
  }

  .views .active {
    border-radius: 6px;
    background: #323545;
    color: #fff;
    font-weight: 600;
    font-size: 20.5px;
  }

  .window {
    margin-right: 38px;
  }

  .workspace {
    display: flex;
    padding-left: 14px;
  }

  aside {
    position: relative;
    width: 98px;
    height: 1158px;
    box-sizing: border-box;
    padding: 12px 9px 0 0;
    display: grid;
    grid-template-rows: repeat(8, 62.9px) 22px 68px 52px 36px 48px 76px 54px 74px 8px 78px 126px;
    align-items: center;
    justify-items: center;
    background: #17181c;
  }

  .tool {
    display: flex;
    align-items: center;
    justify-content: center;
  }

  .tool svg {
    fill: none;
    stroke: #d5d7dc;
    stroke-width: 1.6;
  }

  .tool.blue svg {
    stroke: #4066f0;
    stroke-width: 2;
  }

  .tool.selected {
    width: 53px;
    height: 53px;
    border-radius: 6px;
    background: #4463fb;
  }

  hr {
    width: 63px;
    height: 2px;
    margin: 0;
    border: 0;
    background: #3e4047;
  }

  .collapse {
    position: absolute;
    right: 2px;
    top: 1012px;
    width: 15px;
    height: 47px;
    display: flex;
    align-items: center;
    justify-content: center;
    border-radius: 8px;
    background: #42454e;
  }

  .collapse svg {
    fill: none;
    stroke: #c8cad0;
    stroke-width: 1.5;
  }

  .chart {
    font-family: 'Open Sans', 'Noto Sans', sans-serif;
    font-size: 20.5px;
    font-weight: 400;
  }

  .grid rect {
    fill: #24262d;
  }

  .frame rect {
    fill: #26282e;
  }

  .range {
    fill: #1d3240;
    fill-opacity: 0.32;
  }

  .rsi-band {
    fill: #7e57c2;
    fill-opacity: 0.18;
  }

  .target {
    fill: #65b84f;
    fill-opacity: 0.18;
  }

  .stop {
    fill: #f5e04b;
    fill-opacity: 0.2;
  }

  .projection path {
    fill: none;
  }

  .line-g {
    stroke: #66b04e;
  }

  .line-y {
    stroke: #f9ea58;
  }

  .line-r {
    stroke: #d9403f;
  }

  .projection .diag {
    stroke: #80828b;
    stroke-width: 1.3;
    stroke-dasharray: 5 5;
  }

  .last-line {
    stroke: #54a577;
    stroke-dasharray: 1 2;
  }

  .g {
    fill: #53a474;
  }

  .r {
    fill: #da5564;
  }

  .ema {
    fill: none;
    stroke: #f4e452;
    stroke-width: 2;
  }

  .poc {
    fill: #d8301b;
  }

  .vol {
    opacity: 0.7;
  }

  .vol.dim {
    opacity: 0.25;
  }

  .up-vol {
    fill: #4d93ed;
  }

  .down-vol {
    fill: #eec23d;
  }

  .dots {
    fill: none;
    stroke-width: 3;
    stroke-dasharray: 3 6;
  }

  .dots.red {
    stroke: #dd4646;
  }

  .dots.gray {
    stroke: #7c7d88;
  }

  .dots.green {
    stroke: #67b153;
  }

  .rsi {
    fill: none;
    stroke: #5cb8d7;
    stroke-width: 3.4;
  }

  .vline {
    stroke: #f4e452;
    stroke-dasharray: 5 6;
  }

  .legend-bg {
    fill: #14171d;
    fill-opacity: 0.6;
  }

  .legend-bg.top {
    fill: #111216;
  }

  text {
    fill: #9498a1;
  }

  .symbol {
    font-size: 27px;
  }

  .ohlc {
    font-size: 22.5px;
    fill: #58b778;
  }

  .key {
    fill: #9498a1;
  }

  .indicator {
    font-size: 21.5px;
  }

  .yellow {
    fill: #f9ea58;
    font-weight: 600;
  }

  .cyan {
    fill: #5cb8d7;
  }

  .t-green {
    fill: #66b04e;
  }

  .t-yellow {
    fill: #f9ea58;
    font-weight: 600;
  }

  .t-red {
    fill: #e0423f;
  }

  .mid {
    text-anchor: middle;
  }

  .day {
    font-weight: 600;
  }

  .tag-green {
    fill: #54a56f;
  }

  .tag-yellow {
    fill: #f9ea58;
  }

  .tag-cyan {
    fill: #5fb9d6;
  }

  .tag-text {
    fill: #0a0a0a;
  }

  .tag-text.light {
    fill: #fff;
    font-weight: 600;
  }

  .tv-ring {
    fill: #151b22;
    stroke: #3a3249;
    stroke-width: 1.5;
  }

  .tv-logo,
  .bolt {
    fill: #fff;
  }

  .flash {
    fill: #232b33;
  }

  .gear {
    fill: none;
    stroke: #8c8f99;
    stroke-width: 1.8;
  }

  footer {
    height: 66px;
    box-sizing: border-box;
    padding: 2px 19px 0 27px;
    display: flex;
    align-items: center;
    background: #16171b;
    color: #d5d7dc;
    font-family: 'Open Sans', 'Noto Sans', sans-serif;
    font-size: 24px;
    font-weight: 400;
    letter-spacing: -0.5px;
    white-space: nowrap;
  }

  .calendar {
    fill: none;
    stroke: #d5d7dc;
    stroke-width: 2;
  }

  .clock {
    margin-left: auto;
    letter-spacing: 0.1px;
  }

  footer i {
    width: 2px;
    height: 39px;
    margin: 0 24px 0 28px;
    background: #3e4047;
  }

  .log {
    margin: 0 25px 0 26px;
  }

  .auto {
    color: #4b68f5;
  }

  .book-panel {
    position: relative;
  }

  .book-panel .tabs {
    gap: 0;
    padding: 0 11px 0 28px;
    font-size: 24.5px;
  }

  .book-panel .tab {
    margin-right: 42px;
    font-weight: 600;
  }

  .book-panel .fade {
    margin-right: 16px;
    background: linear-gradient(to right, #858995 45%, #24262c);
    background-clip: text;
    color: transparent;
  }

  .next {
    margin-right: auto;
  }

  .pop {
    margin-right: 17px;
  }

  .modes {
    height: 42px;
    display: flex;
    gap: 14px;
    padding: 28px 11px 0 28px;
  }

  .mode {
    width: 42px;
    height: 42px;
    display: flex;
    align-items: center;
    justify-content: center;
    border-radius: 4px;
  }

  .mode.on {
    background: #23252f;
  }

  .mode svg {
    stroke-width: 3;
  }

  .mr {
    stroke: #e9535b;
  }

  .mg {
    stroke: #53b074;
  }

  .precision {
    width: 125px;
    height: 42px;
    box-sizing: border-box;
    margin-left: auto;
    padding: 0 10px 0 13px;
    display: flex;
    align-items: center;
    justify-content: space-between;
    border-radius: 14px;
    background: #1f212a;
    font-size: 20px;
  }

  .columns,
  .row {
    display: grid;
    grid-template-columns: 181px 168px 1fr;
    align-items: center;
    text-align: right;
  }

  .columns {
    height: 59px;
    margin: 0 10px 0 28px;
    color: #858995;
    font-size: 20px;
    font-weight: 400;
    letter-spacing: 0.6px;
    line-height: 64px;
  }

  .columns span:first-child,
  .row .price {
    text-align: left;
  }

  .rows {
    margin: 0 10px 0 28px;
  }

  .row {
    position: relative;
    height: 36.77px;
    line-height: 36px;
    font-size: 20.4px;
  }

  .row span {
    position: relative;
    height: 37px;
  }

  .row .bar {
    position: absolute;
    top: 0;
    right: 0;
    height: 35px;
    background: #311f25;
  }

  .bid .bar {
    background: #1d2726;
  }

  .row .price {
    font-weight: 400;
    letter-spacing: 0.3px;
    color: #e9535b;
  }

  .bid .price {
    color: #58b778;
  }

  .mid-price {
    height: 54px;
    display: flex;
    align-items: center;
    margin-left: 28px;
  }

  .mid-price b {
    width: 140px;
    font-size: 32.5px;
    font-weight: 600;
    color: #58b778;
  }

  .mid-price svg {
    fill: none;
    stroke: #58b778;
    stroke-width: 2.2;
  }

  .mid-price span {
    margin-left: 12px;
    font-size: 20.5px;
    font-weight: 400;
    letter-spacing: 0.3px;
    color: #858995;
    border-bottom: 1px dashed #5b5e68;
  }

  .bid .price {
    color: #58b778;
  }

  .row.bid .price {
    color: #58b778;
  }

  .ratio {
    height: 35px;
    display: flex;
    margin: 19px 10px 0 28px;
  }

  .ratio b {
    width: 31px;
    height: 32px;
    display: flex;
    align-items: center;
    justify-content: center;
    border-radius: 3px;
    background: #111216;
    font-weight: 500;
  }

  .buy {
    width: 146px;
    box-sizing: border-box;
    padding-left: 2px;
    display: flex;
    align-items: center;
    gap: 9px;
    border-radius: 3px;
    background: #22342c;
    clip-path: polygon(0 0, 140px 0, 146px 100%, 0 100%);
    font-size: 20.5px;
  }

  .sell {
    flex: 1;
    display: flex;
    align-items: center;
    padding-right: 2px;
    border-radius: 3px;
    background: #3d1f25;
    clip-path: polygon(1px 0, 100% 0, 100% 100%, 7px 100%);
    font-size: 20.5px;
  }

  .sell span {
    flex: 1;
    padding-left: 34px;
    text-align: center;
  }

  .watermark {
    position: absolute;
    right: 7px;
    bottom: 10px;
    display: flex;
    align-items: center;
    gap: 5px;
    font-family: 'Noto Sans', sans-serif;
    font-size: 24.3px;
    font-weight: 400;
    color: #e4e4e6;
    text-shadow: 1px 1px 2px #000;
    white-space: nowrap;
  }

  .watermark svg {
    fill: #e4e4e6;
  }
</style>
